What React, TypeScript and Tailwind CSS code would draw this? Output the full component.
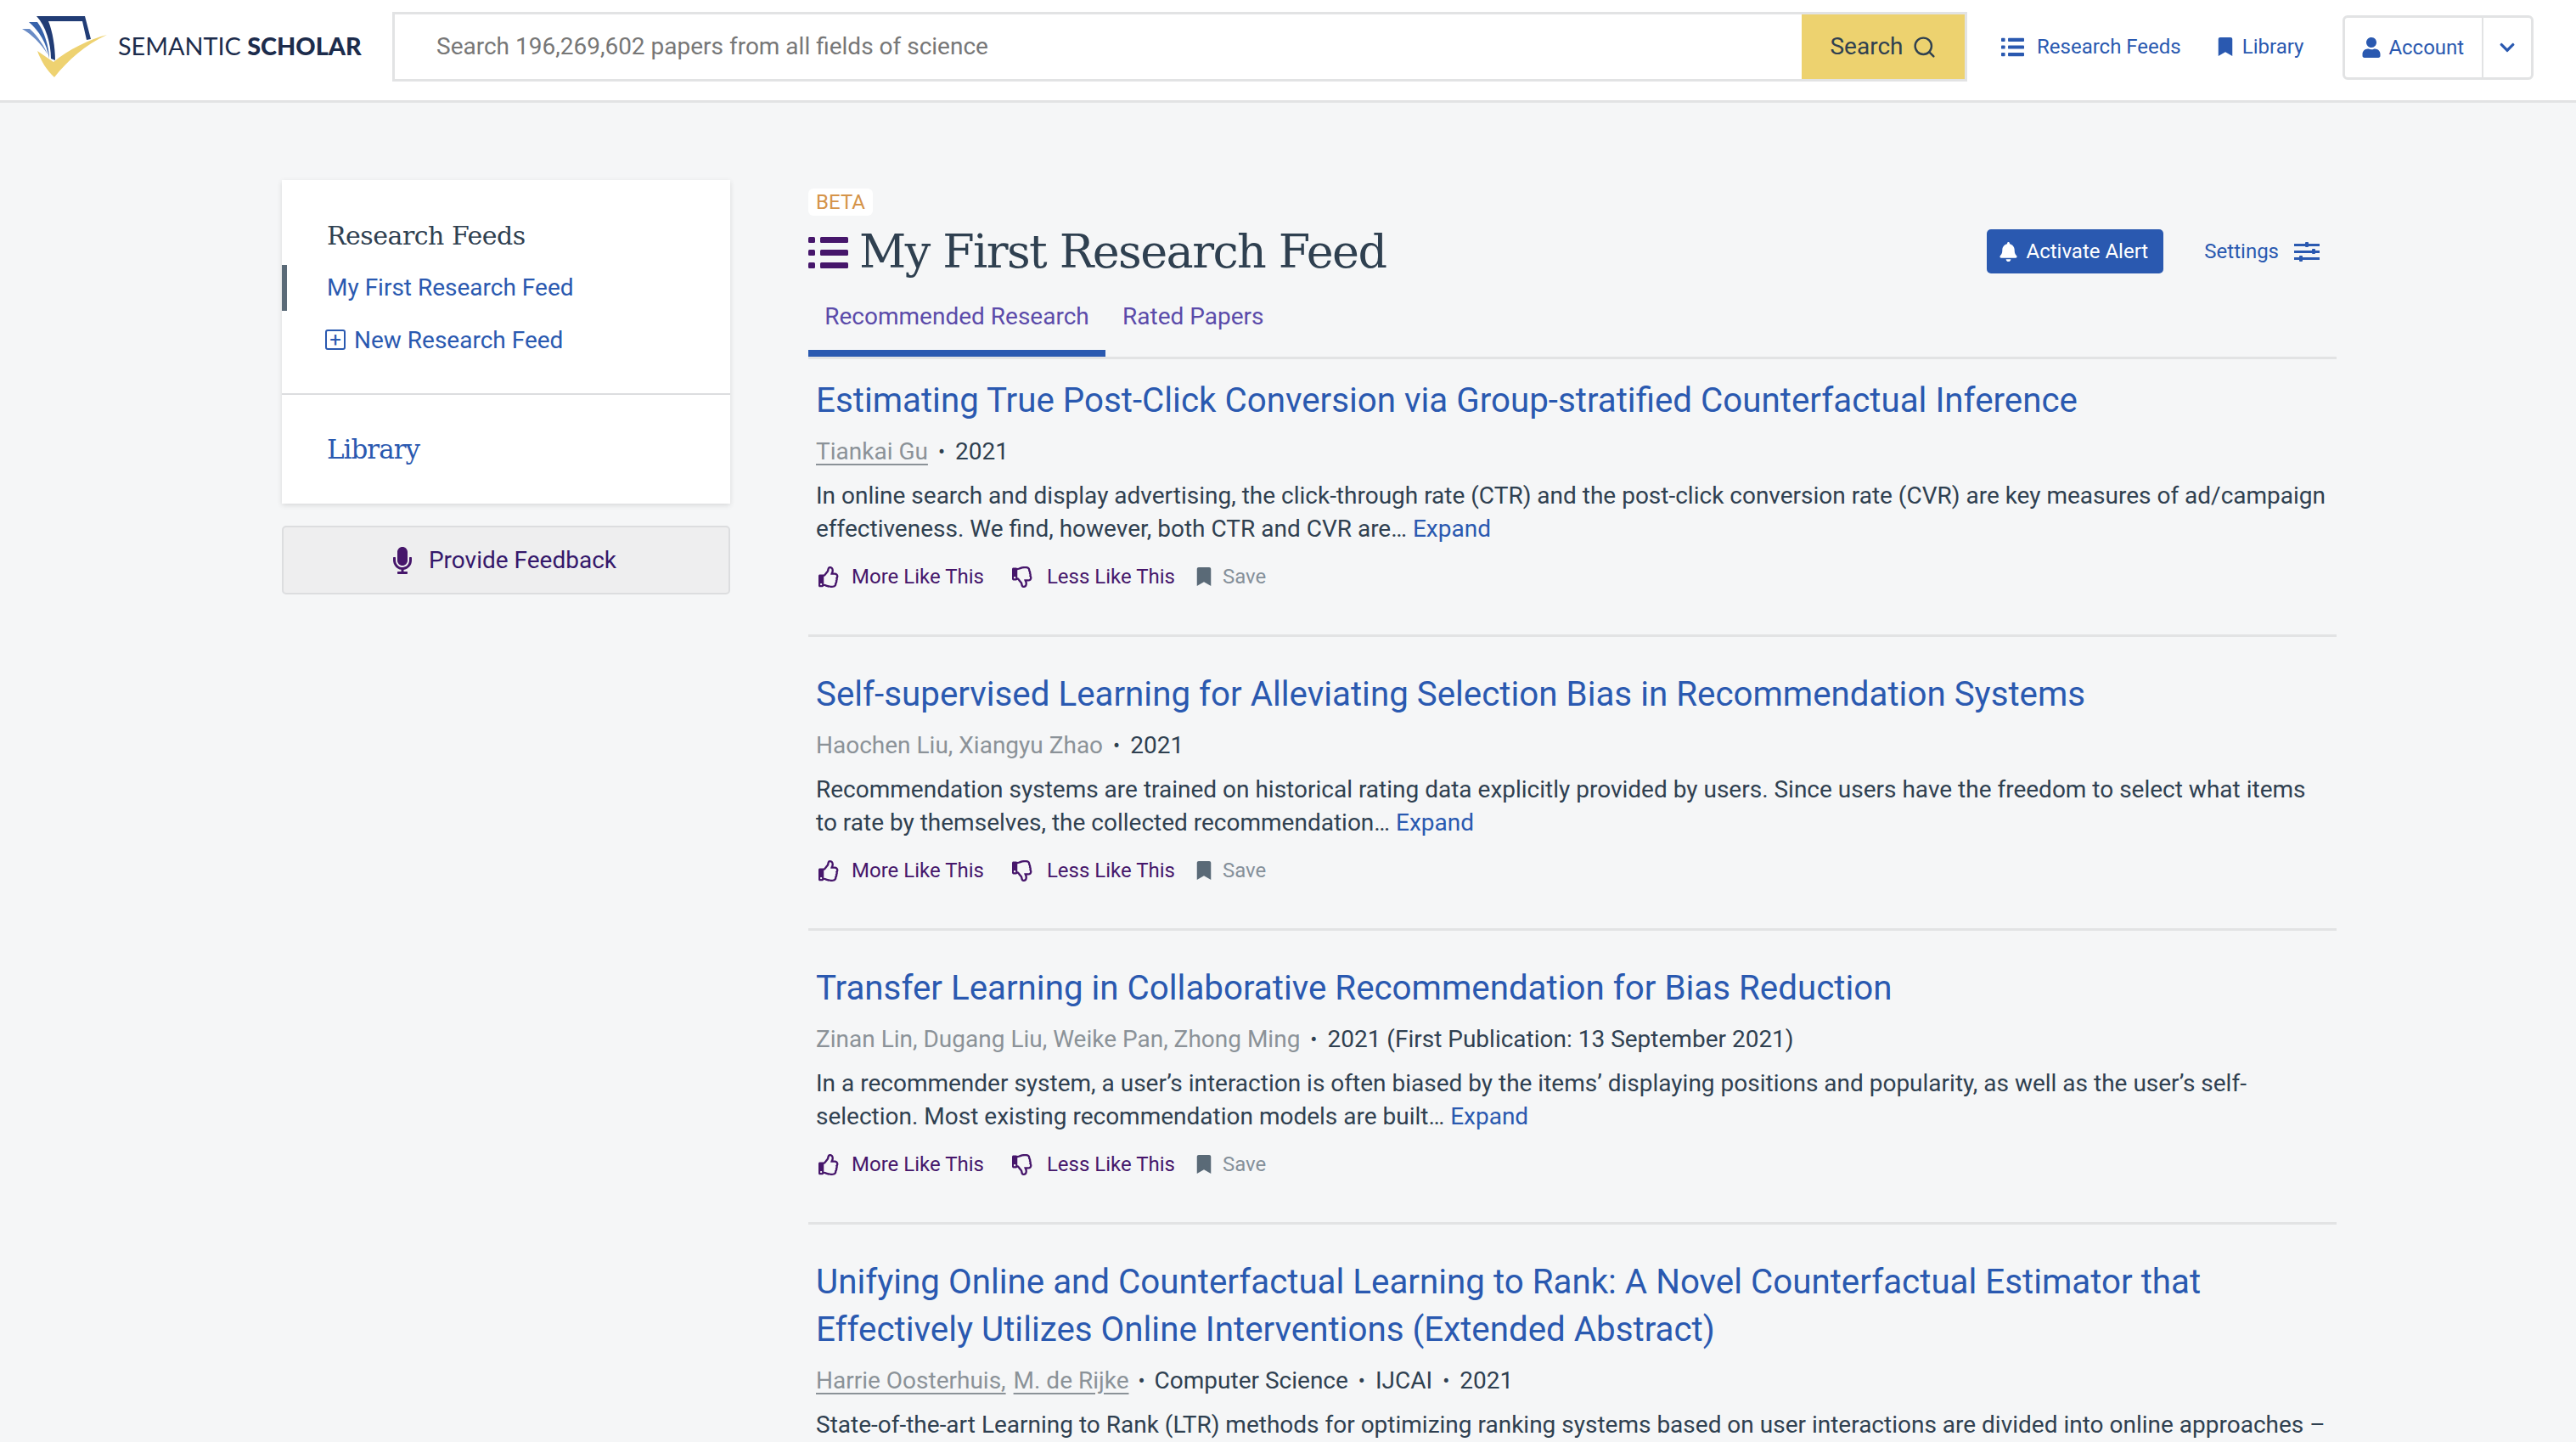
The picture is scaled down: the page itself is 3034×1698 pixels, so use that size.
import { FaBell, FaBookmark, FaChevronDown, FaMicrophone, FaRegThumbsDown, FaRegThumbsUp, FaUser } from "react-icons/fa"
import { Search } from "lucide-react"

type Paper = {
  title: string
  authors: { name: string; link?: boolean }[]
  meta: string[]
  line1: string
  line2: string
}

const papers: Paper[] = [
  {
    title: "Estimating True Post-Click Conversion via Group-stratified Counterfactual Inference",
    authors: [{ name: "Tiankai Gu", link: true }],
    meta: ["2021"],
    line1: "In online search and display advertising, the click-through rate (CTR) and the post-click conversion rate (CVR) are key measures of ad/campaign",
    line2: "effectiveness. We find, however, both CTR and CVR are…",
  },
  {
    title: "Self-supervised Learning for Alleviating Selection Bias in Recommendation Systems",
    authors: [{ name: "Haochen Liu, Xiangyu Zhao" }],
    meta: ["2021"],
    line1: "Recommendation systems are trained on historical rating data explicitly provided by users. Since users have the freedom to select what items",
    line2: "to rate by themselves, the collected recommendation…",
  },
  {
    title: "Transfer Learning in Collaborative Recommendation for Bias Reduction",
    authors: [{ name: "Zinan Lin, Dugang Liu, Weike Pan, Zhong Ming" }],
    meta: ["2021 (First Publication: 13 September 2021)"],
    line1: "In a recommender system, a user’s interaction is often biased by the items’ displaying positions and popularity, as well as the user’s self-",
    line2: "selection. Most existing recommendation models are built…",
  },
]

function Logo() {
  return (
    <svg width="110" height="80" viewBox="20 14 110 80" className="shrink-0">
      <path d="M43 18 L100 18 L107 45 L102 46 L97 24 L57 24 C62 36 65 55 65 70 L60 68 C60 50 54 30 43 18Z" fill="#213c75" />
      <path d="M34 25 L44 25 C52 35 58 55 58 68 C55 50 46 35 34 25Z" fill="#3763ab" />
      <path d="M26 33 L35 33 C45 42 53 55 56 63 C48 50 38 40 26 33Z" fill="#6a8cc6" />
      <path d="M44 59 L63 72 C80 58 105 45 126 40 C100 52 80 70 64 90 C55 82 48 70 44 59Z" fill="#eed271" />
    </svg>
  )
}

function ListIcon({ className }: { className?: string }) {
  return (
    <svg viewBox="0 0 47 37" className={className} fill="currentColor">
      <rect x="0" y="0" width="8" height="7" rx="1.5" />
      <rect x="0" y="15" width="8" height="7" rx="1.5" />
      <rect x="0" y="30" width="8" height="7" rx="1.5" />
      <rect x="14" y="0" width="33" height="7" rx="1.5" />
      <rect x="14" y="15" width="33" height="7" rx="1.5" />
      <rect x="14" y="30" width="33" height="7" rx="1.5" />
    </svg>
  )
}

function Sliders({ className }: { className?: string }) {
  return (
    <svg viewBox="0 0 30 24" className={className} fill="#2a59b0">
      <rect x="0" y="3" width="30" height="3" />
      <rect x="0" y="11" width="30" height="3" />
      <rect x="0" y="19" width="30" height="3" />
      <rect x="13" y="1" width="4" height="6" rx="1" />
      <rect x="21" y="9" width="4" height="6" rx="1" />
      <rect x="6" y="17" width="4" height="7" rx="1" />
    </svg>
  )
}

function PaperRow({ paper }: { paper: Paper }) {
  return (
    <article className="border-b-[3px] border-[#e2e3e4] px-[9px] pb-[53px] pt-[40px] first:pt-[21px]">
      <h3 className="text-[40.3px] leading-[56px] text-[#2a59b0]">{paper.title}</h3>
      <div className="mt-[14px] flex items-center text-[28px] leading-[36px] text-[#2f4050]">
        {paper.authors.map((a) => (
          <span key={a.name} className={a.link ? "text-[#8b9298] underline underline-offset-[5px]" : "text-[#8b9298]"}>
            {a.name}
          </span>
        ))}
        {paper.meta.map((m) => (
          <span key={m} className="flex items-center">
            <span className="mx-[12px] text-[24px]">•</span>
            {m}
          </span>
        ))}
      </div>
      <p className="mt-[14px] text-[28px] leading-[39px] text-[#2f4050]">
        {paper.line1}
        <br />
        {paper.line2} <span className="text-[#2a59b0]">Expand</span>
      </p>
      <Actions />
    </article>
  )
}

function Actions() {
  return (
    <div className="mt-[22px] flex items-center text-[24px] leading-[30px]">
      <FaRegThumbsUp className="ml-[3px] size-[25px] text-[#46166b]" />
      <span className="ml-[14px] text-[#46166b]">More Like This</span>
      <FaRegThumbsDown className="ml-[33px] size-[25px] text-[#46166b]" />
      <span className="ml-[16px] text-[#46166b]">Less Like This</span>
      <FaBookmark className="ml-[23px] size-[22px] text-[#5a6a77]" />
      <span className="ml-[11px] text-[#85909a]">Save</span>
    </div>
  )
}

export default function App() {
  return (
    <div className="h-[1698px] overflow-hidden bg-[#f5f6f7] font-['Roboto',sans-serif]">
      <header className="flex h-[121px] items-center border-b-[3px] border-[#e2e3e4] bg-white pb-[8px]">
        <div className="ml-[20px] flex w-[442px] items-center">
          <Logo />
          <span className="ml-[9px] whitespace-nowrap font-['Lato',sans-serif] text-[28.8px] text-[#1c2c4c]">
            SEMANTIC <b className="font-black">SCHOLAR</b>
          </span>
        </div>
        <div className="flex h-[82px] w-[1855px] border-[3px] border-[#e2e3e4]">
          <div className="flex flex-1 items-center pl-[49px] text-[28px] text-[#777]">
            Search 196,269,602 papers from all fields of science
          </div>
          <div className="flex w-[192px] items-center justify-center gap-[10px] bg-[#edd26f] text-[28px] text-[#2f4050]">
            Search
            <Search className="size-[29px]" strokeWidth={2} />
          </div>
        </div>
        <nav className="ml-[40px] flex items-center text-[24px] text-[#2a59b0]">
          <ListIcon className="h-[23px] w-[27px]" />
          <span className="ml-[15px]">Research Feeds</span>
          <FaBookmark className="ml-[41px] size-[22px]" />
          <span className="ml-[9px]">Library</span>
        </nav>
        <div className="ml-[46px] mt-[2px] flex h-[76px] w-[225px] items-center rounded-[6px] border-[3px] border-[#e2e3e4] text-[24px] text-[#2a59b0]">
          <div className="flex h-full w-[163px] items-center border-r-[2px] border-[#e2e3e4] pl-[19px]">
            <FaUser className="size-[24px]" />
            <span className="ml-[8px]">Account</span>
          </div>
          <div className="flex flex-1 items-center justify-center">
            <FaChevronDown className="size-[20px]" />
          </div>
        </div>
      </header>

      <main className="flex items-start pl-[332px] pt-[91px]">
        <aside className="w-[528px] shrink-0">
          <div className="bg-white shadow-[0_2px_6px_rgba(0,0,0,0.12)]">
            <div className="h-[253px] border-b-[2px] border-[#dcdddf] pt-[46px]">
              <h2 className="pl-[53px] font-['DejaVu_Serif',serif] text-[30px] leading-[40px] tracking-[-0.5px] text-[#2f4050]">Research Feeds</h2>
              <div className="mt-[14px] flex h-[54px] items-center border-l-[6px] border-[#5a6a77] pl-[47px] text-[28px] text-[#2a59b0]">
                My First Research Feed
              </div>
              <div className="mt-[8px] flex h-[54px] items-center pl-[51px] text-[28px] text-[#2a59b0]">
                <span className="mb-[2px] flex size-[24px] items-center justify-center rounded-[3px] border-[2px] border-[#2a59b0] text-[24px] leading-none">+</span>
                <span className="ml-[10px]">New Research Feed</span>
              </div>
            </div>
            <div className="flex h-[128px] items-center pl-[53px] font-['DejaVu_Serif',serif] text-[31px] tracking-[-1px] text-[#2a59b0]">
              Library
            </div>
          </div>
          <div className="mt-[26px] flex h-[81px] items-center justify-center rounded-[5px] border-[2px] border-[#dcdddf] bg-[#eeeeef] pr-[8px] text-[28px] text-[#35186b]">
            <FaMicrophone className="size-[32px] text-[#46166b]" />
            <span className="ml-[15px]">Provide Feedback</span>
          </div>
        </aside>

        <section className="ml-[92px] w-[1800px] shrink-0">
          <span className="mt-[10px] flex h-[32px] w-[76px] items-center justify-center rounded-[6px] bg-white text-[24px] text-[#d59449]">
            BETA
          </span>
          <div className="mt-[4px] flex h-[78px] items-center">
            <ListIcon className="h-[37px] w-[47px] text-[#46166b]" />
            <h1 className="ml-[13px] font-['DejaVu_Serif',serif] text-[54px] leading-[78px] tracking-[-1.6px] text-[#2f4050]">My First Research Feed</h1>
            <div className="mb-[2px] ml-auto mr-[20px] flex items-center">
              <div className="flex h-[52px] w-[208px] items-center justify-center rounded-[5px] bg-[#2a59b0] pr-[4px] text-[24px] text-white">
                <FaBell className="size-[23px]" />
                <span className="ml-[9px]">Activate Alert</span>
              </div>
              <span className="ml-[48px] text-[24px] text-[#2a59b0]">Settings</span>
              <Sliders className="ml-[18px] h-[24px] w-[30px]" />
            </div>
          </div>
          <div className="flex h-[87px] items-start border-b-[3px] border-[#e2e3e4]">
            <div className="flex h-[84px] w-[350px] justify-center border-b-[8px] border-[#2a59b0] pt-[16px] text-[28px] text-[#5b4baa]">
              Recommended Research
            </div>
            <div className="ml-[20px] pt-[16px] text-[28px] text-[#5b4baa]">Rated Papers</div>
          </div>
          <div>
            {papers.map((p) => (
              <PaperRow key={p.title} paper={p} />
            ))}
            <article className="px-[9px] pt-[40px]">
              <h3 className="text-[40.3px] leading-[56px] text-[#2a59b0]">
                Unifying Online and Counterfactual Learning to Rank: A Novel Counterfactual Estimator that
                <br />
                Effectively Utilizes Online Interventions (Extended Abstract)
              </h3>
              <div className="mt-[14px] flex items-center text-[28px] leading-[36px] text-[#2f4050]">
                <span className="text-[#8b9298] underline underline-offset-[5px]">Harrie Oosterhuis,</span>
                <span className="ml-[9px] text-[#8b9298] underline underline-offset-[5px]">M. de Rijke</span>
                <span className="mx-[11px] text-[24px]">•</span>
                Computer Science
                <span className="mx-[12px] text-[24px]">•</span>
                IJCAI
                <span className="mx-[12px] text-[24px]">•</span>
                2021
              </div>
              <p className="mt-[14px] whitespace-nowrap text-[28px] leading-[39px] text-[#2f4050]">
                State-of-the-art Learning to Rank (LTR) methods for optimizing ranking systems based on user interactions are divided into online approaches –
              </p>
            </article>
          </div>
        </section>
      </main>
    </div>
  )
}
